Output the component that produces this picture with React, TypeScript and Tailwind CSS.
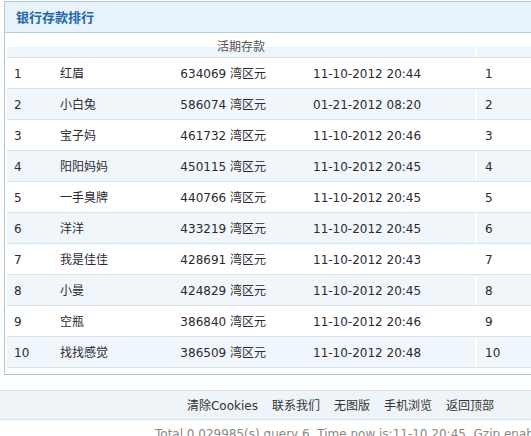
import React from "react";

const rows = [
  ["1", "红眉", "634069", "11-10-2012 20:44"],
  ["2", "小白兔", "586074", "01-21-2012 08:20"],
  ["3", "宝子妈", "461732", "11-10-2012 20:46"],
  ["4", "阳阳妈妈", "450115", "11-10-2012 20:45"],
  ["5", "一手臭牌", "440766", "11-10-2012 20:45"],
  ["6", "洋洋", "433219", "11-10-2012 20:45"],
  ["7", "我是佳佳", "428691", "11-10-2012 20:43"],
  ["8", "小曼", "424829", "11-10-2012 20:45"],
  ["9", "空瓶", "386840", "11-10-2012 20:46"],
  ["10", "找找感觉", "386509", "11-10-2012 20:48"],
];

const links = ["清除Cookies", "联系我们", "无图版", "手机浏览", "返回顶部"];

export default function App() {
  return (
    <div
      className="w-[531px] h-[436px] overflow-hidden bg-white text-[12px] text-[#2a2a33] pt-px"
      style={{ fontFamily: '"DejaVu Sans", Verdana, "Noto Sans CJK SC", sans-serif' }}
    >
      {/* 排行面板 */}
      <div className="ml-1 w-[540px] border border-r-0 border-[#a9c9e2] pb-[6px]">
        <div className="h-[31px] bg-[#e8f2fa] border-b border-[#b3d0e6] flex items-center pl-[11px] pt-[2px]">
          <h2 className="font-bold text-[13px] text-[#1f68ad]">银行存款排行</h2>
        </div>

        <div className="px-[2px]">
          {/* 表头 */}
          <div className="flex h-[25px] border-b border-[#d3e5f0] bg-[linear-gradient(to_bottom,#ffffff_14px,#eef5fb_14px)]">
            <div className="w-[468px] flex items-center justify-center pt-[3px] text-[#555]">活期存款</div>
            <div className="flex-1 border-l-2 border-white"></div>
          </div>

          {rows.map((r, i) => (
            <div
              key={r[0]}
              className={`flex h-[31px] items-center pt-px border-b border-[#d3e5f0] ${
                i % 2 === 1 ? "bg-[#f0f6fa]" : "bg-white"
              }`}
            >
              <div className="w-[46px] pl-[7px]">{r[0]}</div>
              <div className="w-[97px] pl-[7px]">{r[1]}</div>
              <div className="w-[120px] text-right pr-[4px]">{r[2]} 湾区元</div>
              <div className="w-[205px] pl-[43px]">{r[3]}</div>
              <div className="flex-1 self-stretch flex items-center border-l-2 border-white pl-2">{r[0]}</div>
            </div>
          ))}
        </div>
      </div>

      {/* 页脚 */}
      <div className="mt-[15px] h-[30px] bg-[#eef4f8] border-y border-[#d5e4ee] flex items-center justify-end pr-[30px] pt-px text-[#333]">
        {links.map((l) => (
          <a key={l} className="mx-[7px] cursor-pointer">
            {l}
          </a>
        ))}
      </div>

      <div className="pt-[4px] pl-[155px] whitespace-nowrap text-[#888] leading-5">
        Total 0.029985(s) query 6, Time now is:11-10 20:45, Gzip enabled
      </div>
    </div>
  );
}
